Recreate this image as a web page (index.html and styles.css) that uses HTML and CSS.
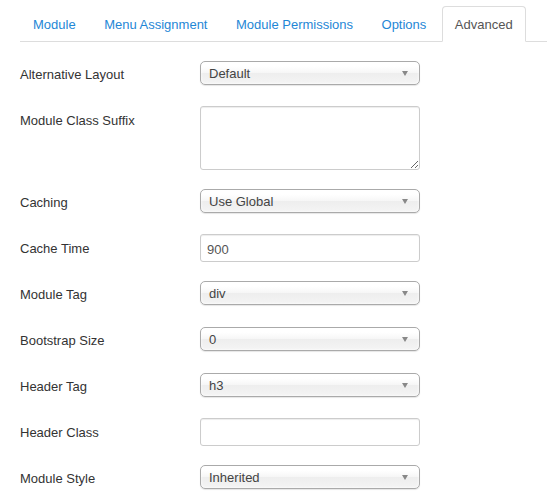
FILE: index.html
```html
<!DOCTYPE html>
<html>
<head>
<meta charset="utf-8">
<link rel="stylesheet" href="styles.css">
</head>
<body>
<div class="page">
  <ul class="tabs">
    <li><a href="#">Module</a></li>
    <li><a href="#">Menu Assignment</a></li>
    <li><a href="#">Module Permissions</a></li>
    <li><a href="#">Options</a></li>
    <li class="active"><a href="#">Advanced</a></li>
  </ul>
  <div class="form">
    <div class="row">
      <div class="label">Alternative Layout</div>
      <div class="control"><div class="select"><span>Default</span><i class="arrow"></i></div></div>
    </div>
    <div class="row">
      <div class="label">Module Class Suffix</div>
      <div class="control"><textarea class="textarea"></textarea></div>
    </div>
    <div class="row">
      <div class="label">Caching</div>
      <div class="control"><div class="select"><span>Use Global</span><i class="arrow"></i></div></div>
    </div>
    <div class="row">
      <div class="label">Cache Time</div>
      <div class="control"><input class="input" type="text" value="900"></div>
    </div>
    <div class="row">
      <div class="label">Module Tag</div>
      <div class="control"><div class="select"><span>div</span><i class="arrow"></i></div></div>
    </div>
    <div class="row">
      <div class="label">Bootstrap Size</div>
      <div class="control"><div class="select"><span>0</span><i class="arrow"></i></div></div>
    </div>
    <div class="row">
      <div class="label">Header Tag</div>
      <div class="control"><div class="select"><span>h3</span><i class="arrow"></i></div></div>
    </div>
    <div class="row">
      <div class="label">Header Class</div>
      <div class="control"><input class="input" type="text" value=""></div>
    </div>
    <div class="row">
      <div class="label">Module Style</div>
      <div class="control"><div class="select"><span>Inherited</span><i class="arrow"></i></div></div>
    </div>
  </div>
</div>
</body>
</html>
```

FILE: styles.css
```css
* { box-sizing: border-box; }
body {
  margin: 0;
  font-family: "Liberation Sans", Arial, sans-serif;
  font-size: 13px;
  line-height: 18px;
  color: #333;
  background: #fff;
}
.page { padding-left: 20px; }
.tabs {
  display: flex;
  list-style: none;
  margin: 0;
  padding: 6px 0 0;
  border-bottom: 1px solid #ddd;
}
.tabs li { margin-bottom: -1px; }
.tabs a {
  display: block;
  padding: 9px 12.5px 7px 12px;
  line-height: 18px;
  border: 1px solid transparent;
  border-radius: 4px 4px 0 0;
  margin-right: 2px;
  color: #1f87d6;
  text-decoration: none;
}
.tabs .active a {
  border-color: #ddd #ddd transparent;
  background: #fff;
  color: #555;
}
.form {
  display: flex;
  flex-direction: column;
  gap: 18px;
  padding-top: 18px;
}
.row { display: flex; min-height: 28px; }
.label { width: 180px; padding-top: 6px; color: #333; }
.control { width: 220px; }
.select {
  display: flex;
  align-items: center;
  justify-content: space-between;
  height: 24px;
  margin-top: 1px;
  padding: 1px 11px 0 8px;
  border: 1px solid #aaa;
  border-radius: 5px;
  background: linear-gradient(to bottom, #fff 20%, #f6f6f6 50%, #eee 52%, #f4f4f4 100%);
  box-shadow: inset 0 0 3px #fff, 0 1px 1px rgba(0,0,0,0.1);
  color: #444;
  line-height: 22px;
}
.arrow {
  width: 0;
  height: 0;
  border-top: 5px solid #888;
  border-left: 3.5px solid transparent;
  border-right: 3.5px solid transparent;
}
.input, .textarea {
  display: block;
  width: 220px;
  margin: 0;
  padding: 5px 6px 3px;
  border: 1px solid #ccc;
  border-radius: 3px;
  box-shadow: inset 0 1px 1px rgba(0,0,0,0.075);
  font-family: "Liberation Sans", Arial, sans-serif;
  font-size: 13px;
  line-height: 18px;
  color: #555;
  background: #fff;
}
.input { height: 28px; }
.textarea { height: 64px; }
```
